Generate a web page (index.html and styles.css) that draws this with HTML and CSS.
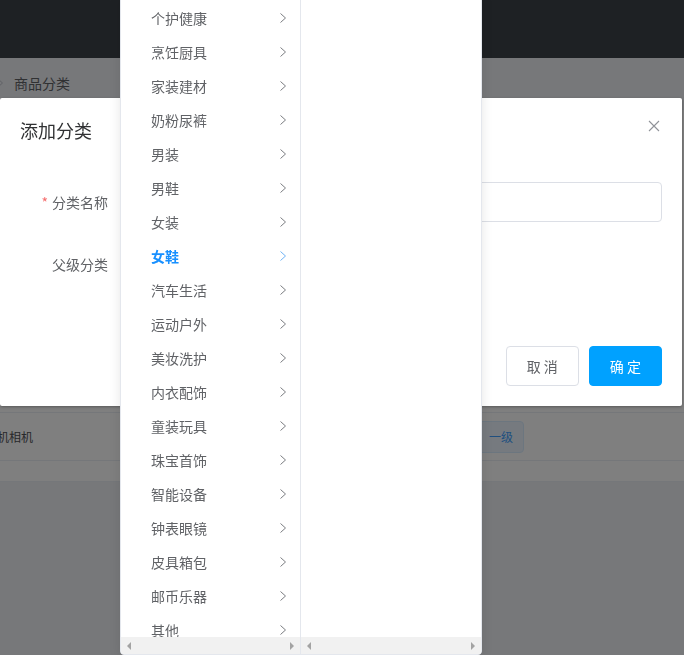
FILE: index.html
```html
<!DOCTYPE html>
<html lang="zh-CN">
<head>
<meta charset="utf-8">
<title>商品分类</title>
<link rel="stylesheet" href="styles.css">
</head>
<body>
<div class="page">
  <header class="topbar"></header>
  <main class="main">
    <nav class="breadcrumb">
      <svg class="bc-sep" viewBox="0 0 6 10" width="6" height="10"><polyline points="0.5,0.5 5.5,5 0.5,9.5" fill="none" stroke="#c0c4cc" stroke-width="1"/></svg>
      <span class="bc-current">商品分类</span>
    </nav>
    <section class="card">
      <div class="table-above"></div>
      <div class="table-row">
        <div class="cell cell-name">手机相机</div>
        <div class="cell cell-level"><span class="tag">一级</span></div>
      </div>
    </section>
  </main>
</div>

<div class="mask"></div>

<div class="dialog">
  <div class="dialog-header">
    <span class="dialog-title">添加分类</span>
    <button class="dialog-close" type="button"><svg viewBox="0 0 12 12" width="12" height="12"><path d="M1 1 L11 11 M11 1 L1 11" stroke="#909399" stroke-width="1.1" fill="none"/></svg></button>
  </div>
  <div class="dialog-body">
    <div class="form-item">
      <label class="form-label"><span class="req">*</span>分类名称</label>
      <div class="form-content"><input class="input" type="text"></div>
    </div>
    <div class="form-item">
      <label class="form-label">父级分类</label>
      <div class="form-content"><div class="cascader-input"></div></div>
    </div>
  </div>
  <div class="dialog-footer">
    <button class="btn" type="button">取 消</button>
    <button class="btn btn-primary" type="button">确 定</button>
  </div>
</div>

<div class="cascader-popup">
  <div class="menu">
    <ul class="menu-list">
      <li class="menu-item"><span>个护健康</span><svg class="arrow" viewBox="0 0 6 10" width="6" height="10"><polyline points="0.5,0.5 5.5,5 0.5,9.5"/></svg></li>
      <li class="menu-item"><span>烹饪厨具</span><svg class="arrow" viewBox="0 0 6 10" width="6" height="10"><polyline points="0.5,0.5 5.5,5 0.5,9.5"/></svg></li>
      <li class="menu-item"><span>家装建材</span><svg class="arrow" viewBox="0 0 6 10" width="6" height="10"><polyline points="0.5,0.5 5.5,5 0.5,9.5"/></svg></li>
      <li class="menu-item"><span>奶粉尿裤</span><svg class="arrow" viewBox="0 0 6 10" width="6" height="10"><polyline points="0.5,0.5 5.5,5 0.5,9.5"/></svg></li>
      <li class="menu-item"><span>男装</span><svg class="arrow" viewBox="0 0 6 10" width="6" height="10"><polyline points="0.5,0.5 5.5,5 0.5,9.5"/></svg></li>
      <li class="menu-item"><span>男鞋</span><svg class="arrow" viewBox="0 0 6 10" width="6" height="10"><polyline points="0.5,0.5 5.5,5 0.5,9.5"/></svg></li>
      <li class="menu-item"><span>女装</span><svg class="arrow" viewBox="0 0 6 10" width="6" height="10"><polyline points="0.5,0.5 5.5,5 0.5,9.5"/></svg></li>
      <li class="menu-item is-active"><span>女鞋</span><svg class="arrow" viewBox="0 0 6 10" width="6" height="10"><polyline points="0.5,0.5 5.5,5 0.5,9.5"/></svg></li>
      <li class="menu-item"><span>汽车生活</span><svg class="arrow" viewBox="0 0 6 10" width="6" height="10"><polyline points="0.5,0.5 5.5,5 0.5,9.5"/></svg></li>
      <li class="menu-item"><span>运动户外</span><svg class="arrow" viewBox="0 0 6 10" width="6" height="10"><polyline points="0.5,0.5 5.5,5 0.5,9.5"/></svg></li>
      <li class="menu-item"><span>美妆洗护</span><svg class="arrow" viewBox="0 0 6 10" width="6" height="10"><polyline points="0.5,0.5 5.5,5 0.5,9.5"/></svg></li>
      <li class="menu-item"><span>内衣配饰</span><svg class="arrow" viewBox="0 0 6 10" width="6" height="10"><polyline points="0.5,0.5 5.5,5 0.5,9.5"/></svg></li>
      <li class="menu-item"><span>童装玩具</span><svg class="arrow" viewBox="0 0 6 10" width="6" height="10"><polyline points="0.5,0.5 5.5,5 0.5,9.5"/></svg></li>
      <li class="menu-item"><span>珠宝首饰</span><svg class="arrow" viewBox="0 0 6 10" width="6" height="10"><polyline points="0.5,0.5 5.5,5 0.5,9.5"/></svg></li>
      <li class="menu-item"><span>智能设备</span><svg class="arrow" viewBox="0 0 6 10" width="6" height="10"><polyline points="0.5,0.5 5.5,5 0.5,9.5"/></svg></li>
      <li class="menu-item"><span>钟表眼镜</span><svg class="arrow" viewBox="0 0 6 10" width="6" height="10"><polyline points="0.5,0.5 5.5,5 0.5,9.5"/></svg></li>
      <li class="menu-item"><span>皮具箱包</span><svg class="arrow" viewBox="0 0 6 10" width="6" height="10"><polyline points="0.5,0.5 5.5,5 0.5,9.5"/></svg></li>
      <li class="menu-item"><span>邮币乐器</span><svg class="arrow" viewBox="0 0 6 10" width="6" height="10"><polyline points="0.5,0.5 5.5,5 0.5,9.5"/></svg></li>
      <li class="menu-item"><span>其他</span><svg class="arrow" viewBox="0 0 6 10" width="6" height="10"><polyline points="0.5,0.5 5.5,5 0.5,9.5"/></svg></li>
    </ul>
    <div class="hscroll"><span class="tri tri-left"></span><span class="tri tri-right"></span></div>
  </div>
  <div class="menu">
    <ul class="menu-list"></ul>
    <div class="hscroll"><span class="tri tri-left"></span><span class="tri tri-right"></span></div>
  </div>
</div>
</body>
</html>
```

FILE: styles.css
```css
* { box-sizing: border-box; }

html, body {
  margin: 0;
  padding: 0;
}

body {
  width: 684px;
  height: 655px;
  overflow: hidden;
  position: relative;
  background: #eef0f4;
  font-family: "Noto Sans CJK SC", "Noto Sans", sans-serif;
  font-size: 14px;
  color: #606266;
}

.page {
  height: 655px;
}

.topbar {
  height: 58px;
  background: #3d4349;
}

.breadcrumb {
  display: flex;
  align-items: center;
  height: 18px;
  margin-top: 16px;
  line-height: 18px;
  font-size: 14px;
}

.bc-sep {
  margin-left: -3px;
  margin-right: 11px;
  flex-shrink: 0;
}

.bc-current {
  color: #606266;
}

.card {
  margin: 17px -60px 0 -60px;
  background: #fff;
  border: 1px solid #ebeef5;
  border-radius: 4px;
  padding: 20px;
}

.table-above {
  height: 283px;
  border-bottom: 1px solid #ebeef5;
}

.table-row {
  display: grid;
  grid-template-columns: 517px 1fr;
  height: 48px;
  border-bottom: 1px solid #ebeef5;
  align-items: center;
}

.cell-name {
  padding-left: 24px;
  font-size: 12px;
  color: #505256;
}

.tag {
  display: inline-block;
  height: 32px;
  line-height: 30px;
  padding: 0 10px;
  font-size: 12px;
  color: #409eff;
  background: #ecf5ff;
  border: 1px solid #d9ecff;
  border-radius: 4px;
}

.mask {
  position: fixed;
  inset: 0;
  background: rgba(0, 0, 0, 0.5);
}

.dialog {
  position: absolute;
  top: 98px;
  left: 0;
  width: 682px;
  background: #fff;
  border-radius: 2px;
  box-shadow: 0 1px 3px rgba(0, 0, 0, 0.3);
}

.dialog-header {
  position: relative;
  padding: 20px 20px 10px;
}

.dialog-title {
  display: block;
  font-size: 18px;
  line-height: 24px;
  color: #303133;
}

.dialog-close {
  position: absolute;
  top: 20px;
  right: 20px;
  width: 16px;
  height: 16px;
  padding: 0;
  border: none;
  background: none;
  display: flex;
  align-items: center;
  justify-content: center;
}

.dialog-body {
  padding: 30px 20px;
}

.form-item {
  display: flex;
  margin-bottom: 22px;
}

.form-label {
  width: 100px;
  flex-shrink: 0;
  text-align: right;
  padding-right: 12px;
  line-height: 40px;
  font-size: 14px;
  color: #606266;
}

.req {
  color: #f56c6c;
  margin-right: 4px;
}

.form-content {
  flex: 1;
}

.input {
  display: block;
  width: 100%;
  height: 40px;
  border: 1px solid #dcdfe6;
  border-radius: 4px;
  background: #fff;
  outline: none;
}

.cascader-input {
  width: 222px;
  height: 40px;
  border: 1px solid #dcdfe6;
  border-radius: 4px;
}

.dialog-footer {
  display: flex;
  justify-content: flex-end;
  gap: 10px;
  padding: 10px 20px 20px;
}

.btn {
  height: 40px;
  padding: 0 20px;
  font-family: "Noto Sans CJK SC", "Noto Sans", sans-serif;
  font-size: 14px;
  color: #606266;
  background: #fff;
  border: 1px solid #dcdfe6;
  border-radius: 4px;
}

.btn-primary {
  color: #fff;
  background: #00a1ff;
  border-color: #00a1ff;
}

.cascader-popup {
  position: absolute;
  left: 120px;
  top: -6px;
  height: 661px;
  display: flex;
  background: #fff;
  border: 1px solid #e4e7ed;
  border-radius: 4px;
  box-shadow: 0 2px 12px rgba(0, 0, 0, 0.1);
  overflow: hidden;
}

.menu {
  width: 180px;
  display: flex;
  flex-direction: column;
  border-right: 1px solid #e4e7ed;
}

.menu:last-child {
  border-right: none;
}

.menu-list {
  flex: 1;
  margin: 0;
  padding: 6px 0 0;
  list-style: none;
  overflow: hidden;
}

.menu-item {
  display: flex;
  align-items: center;
  justify-content: space-between;
  height: 34px;
  line-height: 34px;
  padding: 0 14px 0 30px;
  font-size: 14px;
  color: #606266;
}

.arrow {
  flex-shrink: 0;
  fill: none;
  stroke: #7a7c80;
  stroke-width: 1;
}

.menu-item.is-active {
  color: #1890ff;
  font-weight: bold;
}

.menu-item.is-active .arrow {
  stroke: #6fb3f5;
}

.hscroll {
  flex-shrink: 0;
  height: 17px;
  background: #f1f1f1;
  display: flex;
  align-items: center;
  justify-content: space-between;
  padding: 0 6px;
}

.tri {
  width: 0;
  height: 0;
  border-top: 4px solid transparent;
  border-bottom: 4px solid transparent;
}

.tri-left {
  border-right: 4px solid #a3a3a3;
}

.tri-right {
  border-left: 4px solid #a3a3a3;
}
```
